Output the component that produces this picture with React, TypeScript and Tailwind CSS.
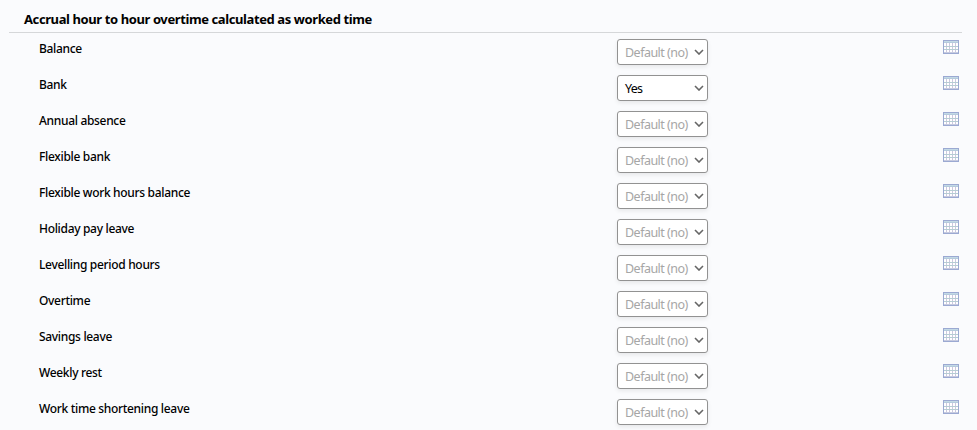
import { clsx } from "clsx";

interface AccrualRow {
  label: string;
  value?: string;
}

const ROWS: AccrualRow[] = [
  { label: "Balance" },
  { label: "Bank", value: "Yes" },
  { label: "Annual absence" },
  { label: "Flexible bank" },
  { label: "Flexible work hours balance" },
  { label: "Holiday pay leave" },
  { label: "Levelling period hours" },
  { label: "Overtime" },
  { label: "Savings leave" },
  { label: "Weekly rest" },
  { label: "Work time shortening leave" },
];

function CalendarIcon() {
  return (
    <svg width="16" height="14" viewBox="0 0 16 14" shapeRendering="crispEdges" aria-hidden="true">
      <rect width="16" height="14" fill="#9ba9d2" />
      <rect x="1" y="1" width="14" height="1" fill="#c3d9e6" />
      <rect x="1" y="2" width="14" height="1" fill="#b4cbdc" />
      <rect x="1" y="3" width="14" height="10" fill="#fff" />
      <path d="M3.5 3v10M6.5 3v10M9.5 3v10M12.5 3v10" stroke="#cdc8df" />
      <path d="M1 6.5h14M1 9.5h14" stroke="#b5cdd3" />
      <path d="M1 12.5h14" stroke="#c7cbe0" />
    </svg>
  );
}

function SelectBox({ value }: { value?: string }) {
  return (
    <button
      type="button"
      className={clsx(
        "flex h-[26px] w-[91px] items-center justify-between rounded-[3px] border border-[#929292] bg-white pr-[3px] pl-[7px] leading-4 shadow-[0_2px_4px_rgba(0,0,0,0.08)]",
        value ? "text-black" : "text-[#a6a6a6]"
      )}
    >
      <span
        className={clsx(
          "pt-0.5 text-[12.5px] whitespace-nowrap",
          value ? "tracking-[-0.8px]" : "tracking-[-0.52px]"
        )}
      >
        {value ?? "Default (no)"}
      </span>
      <svg width="10" height="6" viewBox="0 0 10 6" fill="none" aria-hidden="true">
        <path d="M1 1l4 4 4-4" stroke="#666" strokeWidth="1.6" />
      </svg>
    </button>
  );
}

export default function App() {
  return (
    <div className="h-[430px] overflow-hidden bg-[#fafbfd] pr-[15px] pl-[9px] font-['Noto_Sans',sans-serif] text-black">
      <h2 className="h-[33px] border-b border-[#d5d7d9] pt-[10px] pl-[15px] text-[13px] leading-[18px] font-bold">
        <span className="tracking-[-0.4px]">Accrual hour to hour overtime calculated as worked time</span>
      </h2>
      {ROWS.map((row) => (
        <div key={row.label} className="flex h-9 items-start pr-[3px] pl-[30px]">
          <span className="w-[578px] pt-2 text-[12px] leading-4 font-medium tracking-[-0.32px]">
            {row.label}
          </span>
          <div className="pt-1.5">
            <SelectBox value={row.value} />
          </div>
          <button type="button" className="ml-auto pt-[7px]">
            <CalendarIcon />
          </button>
        </div>
      ))}
    </div>
  );
}
